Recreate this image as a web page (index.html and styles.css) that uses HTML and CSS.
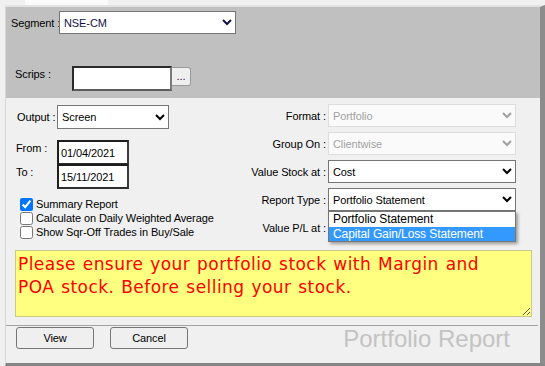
FILE: index.html
```html
<!DOCTYPE html>
<html>
<head>
<meta charset="utf-8">
<title>Portfolio Report</title>
<link rel="stylesheet" href="styles.css">
</head>
<body>
<div class="tabstrip"><div class="tab"></div></div>
<div class="frame">
  <div class="filter-panel">
    <div class="seg-row">
      <label class="seg-label">Segment :</label>
      <select class="seg-select"><option>NSE-CM</option></select>
    </div>
    <div class="scrip-row">
      <label class="scrip-label">Scrips :</label>
      <input class="scrip-input" type="text">
      <button class="dots-btn">...</button>
    </div>
  </div>
  <div class="body-panel">
    <div class="cols">
      <div class="left">
        <div class="out-row">
          <label class="out-label">Output :</label>
          <select class="out-select"><option>Screen</option></select>
        </div>
        <div class="dates">
          <div class="date-row">
            <label class="date-label">From :</label>
            <input class="date-input" type="text" value="01/04/2021">
          </div>
          <div class="date-row to-row">
            <label class="date-label">To :</label>
            <input class="date-input" type="text" value="15/11/2021">
          </div>
        </div>
        <div class="checks">
          <label class="check-row"><input type="checkbox" checked>Summary Report</label>
          <label class="check-row"><input type="checkbox">Calculate on Daily Weighted Average</label>
          <label class="check-row"><input type="checkbox">Show Sqr-Off Trades in Buy/Sale</label>
        </div>
      </div>
      <div class="right">
        <label class="r-label">Format :</label>
        <select class="r-select" disabled><option>Portfolio</option></select>
        <label class="r-label">Group On :</label>
        <select class="r-select" disabled><option>Clientwise</option></select>
        <label class="r-label">Value Stock at :</label>
        <select class="r-select"><option>Cost</option></select>
        <label class="r-label">Report Type :</label>
        <div class="cell">
          <select class="r-select"><option>Portfolio Statement</option></select>
          <div class="dropdown">
            <div class="dd-opt">Portfolio Statement</div>
            <div class="dd-opt dd-sel">Capital Gain/Loss Statement</div>
          </div>
        </div>
        <label class="r-label">Value P/L at :</label>
        <select class="r-select r-hidden"><option>Cost</option></select>
      </div>
    </div>
    <textarea class="note">Please ensure your portfolio stock with Margin and POA stock. Before selling your stock.</textarea>
    <div class="footer">
      <button class="act-btn">View</button>
      <button class="act-btn cancel-btn">Cancel</button>
      <div class="title">Portfolio Report</div>
    </div>
  </div>
</div>
</body>
</html>
```

FILE: styles.css
```css
* { box-sizing: border-box; }
html, body { margin: 0; padding: 0; }
body {
  width: 545px;
  height: 366px;
  overflow: hidden;
  background: #f0f0f0;
  font-family: "Liberation Sans", Arial, sans-serif;
  font-size: 11px;
  letter-spacing: -0.1px;
  color: #000;
}
label { white-space: nowrap; flex-shrink: 0; }
select, input, button, textarea {
  font-family: "Liberation Sans", Arial, sans-serif;
  font-size: 11px;
  letter-spacing: -0.1px;
  margin: 0;
}
.tabstrip { height: 5px; background: #f0f0f0; padding-left: 25px; }
.tab { width: 83px; height: 5px; background: #fbfbfb; }
.frame {
  margin-left: 5px;
  height: 361px;
  border-top: 2px solid #e3e3e3;
  border-right: 5px solid #8c8c8c;
  border-bottom: 3px solid #858585;
  border-left: 1px solid #d6d6d6;
  display: flex;
  flex-direction: column;
}
.filter-panel { height: 91px; background: #c0c0c0; padding: 4px 0 0 5px; flex: none; }
.seg-row { display: flex; align-items: center; height: 23px; }
.seg-label { width: 48px; }
.seg-select { width: 177px; height: 23px; color: #12124a; background: #fff; flex-shrink: 0; }
.scrip-row { display: flex; align-items: flex-start; margin-top: 32px; padding-left: 4px; }
.scrip-label { width: 57px; padding-top: 2px; line-height: 13px; }
.scrip-input {
  width: 100px;
  height: 25px;
  border: 2px solid;
  border-color: #2b2b2b #7a7a7a #5c5c5c #2b2b2b;
  background: #fff;
  outline: none;
}
.dots-btn {
  width: 19px;
  height: 19px;
  margin-top: 1px;
  padding: 0;
  background: #efefef;
  border: 1px solid #9a9a9a;
  border-left: none;
  border-radius: 0 3px 3px 0;
  color: #2a0a4a;
  line-height: 17px;
}
.body-panel { flex: 1; background: #f0f0f0; display: flex; flex-direction: column; }
.cols { display: flex; justify-content: space-between; height: 141px; padding: 6px 24px 0 10px; }
.left { display: flex; flex-direction: column; padding-top: 1px; }
.out-row { display: flex; align-items: center; }
.out-label { width: 41px; padding-left: 1px; }
.out-select { width: 112px; height: 24px; background: #fff; }
.dates { margin-top: 11px; }
.date-row { display: flex; align-items: flex-start; }
.to-row { margin-top: -1px; }
.date-label { width: 41px; padding-top: 2px; line-height: 13px; }
.date-input {
  width: 72px;
  height: 25px;
  border: 2px solid;
  border-color: #1e1e1e #3a3a3a #2e2e2e #1e1e1e;
  padding: 0 2px;
  background: #fff;
  color: #000;
  font-size: 11px;
  outline: none;
}
.checks { margin-top: 8px; display: flex; flex-direction: column; }
.check-row { display: flex; align-items: center; height: 14px; }
.check-row input { width: 13px; height: 13px; margin: 0 3px 0 4px; }
.right {
  display: grid;
  grid-template-columns: auto 188px;
  grid-auto-rows: 23px;
  column-gap: 2px;
  row-gap: 5px;
  align-content: start;
}
.r-label { text-align: right; align-self: center; }
.r-select { width: 188px; height: 23px; background: #fff; }
.cell { position: relative; }
.dropdown {
  position: absolute;
  top: 23px;
  left: 0;
  width: 188px;
  background: #fff;
  border: 1px solid #767676;
  box-shadow: 2px 2px 3px rgba(0, 0, 0, 0.35);
  z-index: 5;
}
.dd-opt { height: 15px; line-height: 14px; padding-left: 4px; font-size: 12px; }
.dd-sel { background: #3399ff; color: #fff; height: 14px; }
.note {
  display: block;
  margin: 11px 8px 0 9px;
  width: 517px;
  height: 67px;
  padding: 2px 14px 2px 2px;
  background: #ffff80;
  border: 1px solid #c9c98a;
  color: #ff0000;
  font-family: "DejaVu Sans", Verdana, sans-serif;
  font-size: 17px;
  line-height: 23px;
  letter-spacing: 0.45px;
  word-spacing: 1px;
  outline: none;
}
.footer {
  display: flex;
  align-items: flex-start;
  margin-top: 8px;
  margin-right: 2px;
  border-top: 1px solid #a3a3a3;
  padding: 1px 0 0 10px;
  flex: 1;
}
.act-btn {
  width: 78px;
  height: 22px;
  background: #efefef;
  border: 1px solid #767676;
  border-radius: 3px;
  color: #000;
  padding: 0;
}
.cancel-btn { margin-left: 16px; }
.title {
  margin-left: auto;
  margin-right: 28px;
  margin-top: 1px;
  font-size: 24px;
  line-height: 22px;
  letter-spacing: 0;
  color: #c3c3c3;
}
```
